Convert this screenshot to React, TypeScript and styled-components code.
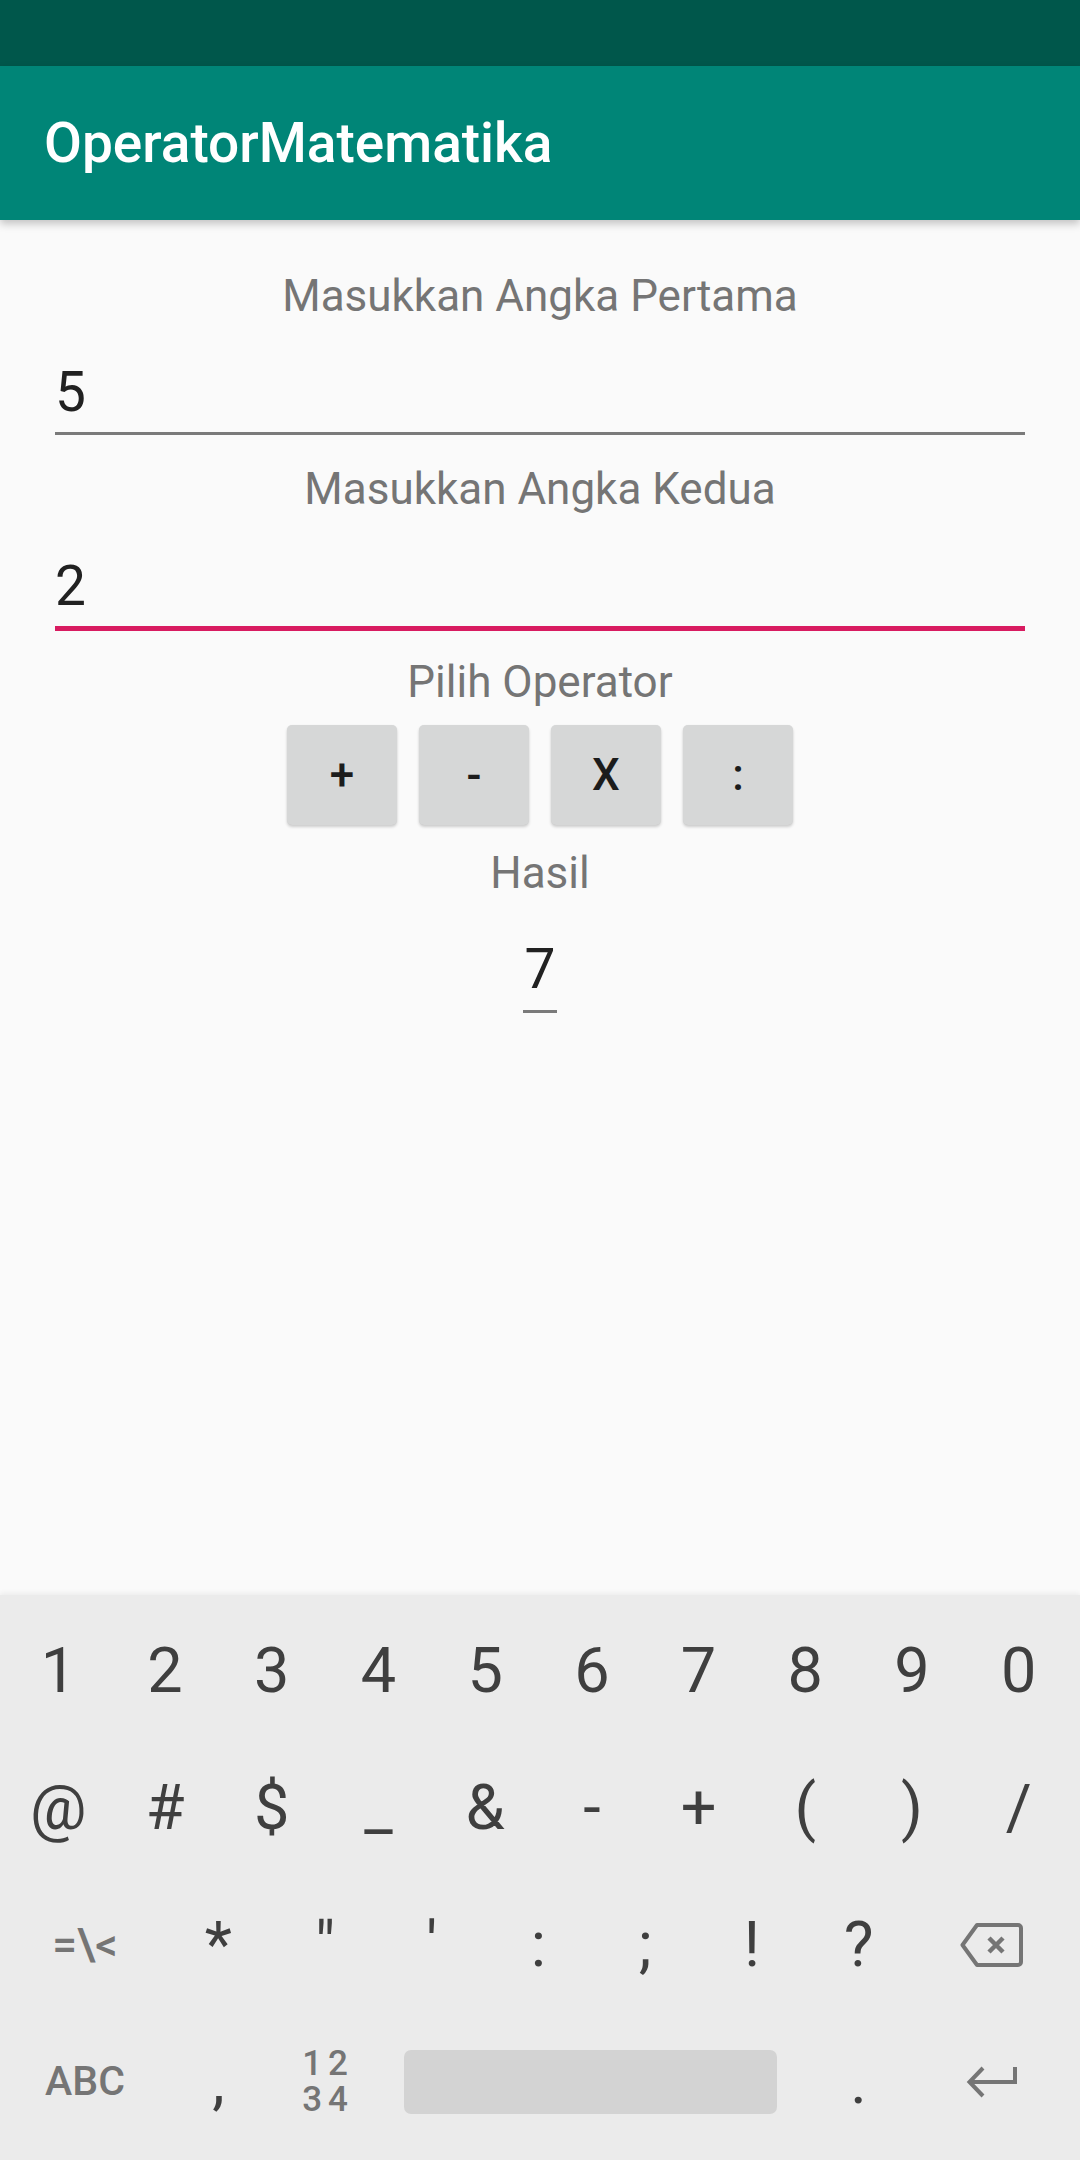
import React from "react";
import styled, { createGlobalStyle } from "styled-components";

const GlobalStyle = createGlobalStyle`
  html, body {
    margin: 0;
    padding: 0;
    background: #fafafa;
  }
  * { box-sizing: border-box; }
`;

const Screen = styled.div`
  width: 1080px;
  height: 2160px;
  display: flex;
  flex-direction: column;
  background: #fafafa;
  font-family: Roboto, "Noto Sans", sans-serif;
  overflow: hidden;
`;

const StatusBar = styled.div`
  height: 66px;
  background: #00574b;
  flex-shrink: 0;
`;

const AppBar = styled.header`
  height: 154px;
  background: #008577;
  display: flex;
  align-items: center;
  padding-left: 44px;
  box-shadow: 0 4px 8px rgba(0, 0, 0, 0.22);
  position: relative;
  z-index: 1;
  flex-shrink: 0;
`;

const Title = styled.h1`
  margin: 0;
  font-family: Roboto, sans-serif;
  font-weight: 500;
  font-size: 55px;
  line-height: 70px;
  color: #ffffff;
`;

const Form = styled.main`
  display: flex;
  flex-direction: column;
  padding: 0 55px;
`;

const Label = styled.div<{ $mt: number }>`
  margin-top: ${(p) => p.$mt}px;
  font-size: 44px;
  line-height: 60px;
  color: #757575;
  text-align: center;
`;

const Field = styled.div<{ $mt: number }>`
  margin-top: ${(p) => p.$mt}px;
  display: flex;
  flex-direction: column;
`;

const FieldValue = styled.div`
  font-size: 55px;
  line-height: 70px;
  color: #212121;
`;

const Underline = styled.div<{ $focused?: boolean }>`
  margin-top: 5px;
  height: ${(p) => (p.$focused ? 5 : 3)}px;
  background: ${(p) => (p.$focused ? "#d81b60" : "#7a7a7a")};
`;

const OperatorRow = styled.div`
  margin-top: 13px;
  display: flex;
  justify-content: center;
  gap: 22px;
`;

const OpButton = styled.button`
  width: 110px;
  height: 100px;
  border: none;
  border-radius: 5px;
  background: #d6d7d7;
  box-shadow: 0 2px 3px rgba(0, 0, 0, 0.18), 0 0 1px rgba(0, 0, 0, 0.08);
  font-family: Roboto, sans-serif;
  font-weight: 500;
  font-size: 44px;
  color: #1c1c1c;
  padding: 0;
  display: flex;
  align-items: center;
  justify-content: center;
`;

const ResultWrap = styled.div`
  margin-top: 31px;
  display: flex;
  flex-direction: column;
  align-items: center;
`;

const ResultValue = styled.div`
  font-size: 55px;
  line-height: 70px;
  color: #212121;
`;

const ResultLine = styled.div`
  margin-top: 6px;
  width: 34px;
  height: 3px;
  background: #7a7a7a;
`;

const Keyboard = styled.div`
  margin-top: auto;
  height: 565px;
  background: #ebebeb;
  box-shadow: 0 -2px 5px rgba(0, 0, 0, 0.06);
  padding: 7px 8px 10px 5px;
  display: grid;
  grid-template-columns: repeat(20, 1fr);
  grid-template-rows: repeat(4, 137px);
`;

const Key = styled.div<{ $span?: number }>`
  grid-column: span ${(p) => p.$span ?? 2};
  display: flex;
  align-items: center;
  justify-content: center;
  font-family: Roboto, sans-serif;
  font-size: 63px;
  line-height: 63px;
  color: #3f3f3f;
`;

const FnKey = styled(Key)<{ $size: number }>`
  font-size: ${(p) => p.$size}px;
  line-height: ${(p) => p.$size}px;
  font-weight: 500;
  color: #757575;
`;

const Stacked = styled.div`
  display: flex;
  flex-direction: column;
  align-items: center;
  gap: 2px;
  font-size: 35px;
  line-height: 34px;
  letter-spacing: 6px;
  font-weight: 500;
  color: #757575;
  padding-left: 6px;
`;

const SpaceKey = styled.div`
  grid-column: span 8;
  display: flex;
  align-items: center;
  padding: 0 28px 0 26px;
`;

const SpaceBar = styled.div`
  flex: 1;
  height: 64px;
  border-radius: 7px;
  background: #d3d3d3;
`;

const digits = ["1", "2", "3", "4", "5", "6", "7", "8", "9", "0"];
const symbols = ["@", "#", "$", "_", "&", "-", "+", "(", ")", "/"];
const row3 = ["*", "\"", "'", ":", ";", "!", "?"];

const BackspaceIcon = () => (
  <svg width="63" height="44" viewBox="0 0 63 44" fill="none">
    <path
      d="M2.5 22 L17 2 H58 a3 3 0 0 1 3 3 V39 a3 3 0 0 1 -3 3 H17 Z"
      stroke="#757575"
      strokeWidth="4"
      strokeLinejoin="round"
    />
    <path d="M29 15 L43 29 M43 15 L29 29" stroke="#757575" strokeWidth="4.5" />
  </svg>
);

const EnterIcon = () => (
  <svg width="52" height="32" viewBox="0 0 52 32" fill="none">
    <path d="M49 1 V16 H5" stroke="#757575" strokeWidth="4" />
    <path d="M17 2 L3.5 16 L17 30" stroke="#757575" strokeWidth="4" />
  </svg>
);

export default function App() {
  return (
    <>
      <GlobalStyle />
      <Screen>
        <StatusBar />
        <AppBar>
          <Title>OperatorMatematika</Title>
        </AppBar>
        <Form>
          <Label $mt={46}>Masukkan Angka Pertama</Label>
          <Field $mt={31}>
            <FieldValue>5</FieldValue>
            <Underline />
          </Field>
          <Label $mt={24}>Masukkan Angka Kedua</Label>
          <Field $mt={32}>
            <FieldValue>2</FieldValue>
            <Underline $focused />
          </Field>
          <Label $mt={21}>Pilih Operator</Label>
          <OperatorRow>
            <OpButton>+</OpButton>
            <OpButton>-</OpButton>
            <OpButton>X</OpButton>
            <OpButton>:</OpButton>
          </OperatorRow>
          <Label $mt={18}>Hasil</Label>
          <ResultWrap>
            <ResultValue>7</ResultValue>
            <ResultLine />
          </ResultWrap>
        </Form>
        <Keyboard>
          {digits.map((d) => (
            <Key key={d}>{d}</Key>
          ))}
          {symbols.map((s) => (
            <Key key={s}>{s}</Key>
          ))}
          <FnKey $span={3} $size={44}>=\&lt;</FnKey>
          {row3.map((s) => (
            <Key key={s}>{s}</Key>
          ))}
          <Key $span={3}>
            <BackspaceIcon />
          </Key>
          <FnKey $span={3} $size={41}>ABC</FnKey>
          <Key>,</Key>
          <Key>
            <Stacked>
              <span>12</span>
              <span>34</span>
            </Stacked>
          </Key>
          <SpaceKey>
            <SpaceBar />
          </SpaceKey>
          <Key>.</Key>
          <Key $span={3}>
            <EnterIcon />
          </Key>
        </Keyboard>
      </Screen>
    </>
  );
}
